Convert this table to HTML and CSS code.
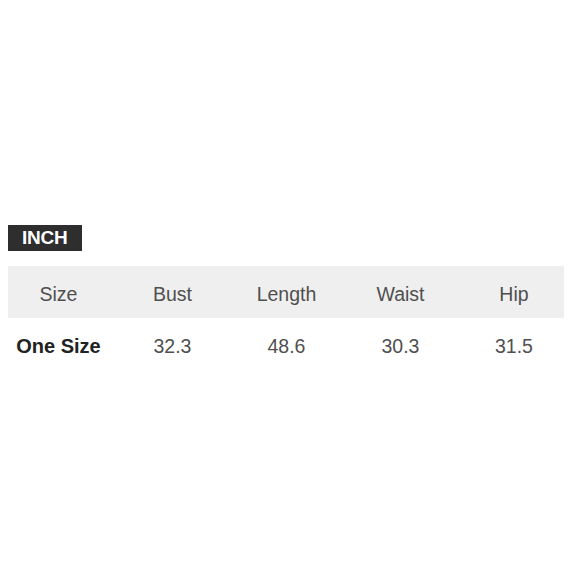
FILE: index.html
```html
<!DOCTYPE html>
<html>
<head>
<meta charset="utf-8">
<link rel="stylesheet" href="styles.css">
</head>
<body>
<div class="wrap">
  <div class="unit">INCH</div>
  <div class="table">
    <div class="row head">
      <div>Size</div><div>Bust</div><div>Length</div><div>Waist</div><div>Hip</div>
    </div>
    <div class="row">
      <div class="name">One Size</div><div>32.3</div><div>48.6</div><div>30.3</div><div>31.5</div>
    </div>
  </div>
</div>
</body>
</html>
```
FILE: styles.css
```css
html, body { margin: 0; padding: 0; background: #fff; }
body { font-family: "Liberation Sans", Arial, sans-serif; }
.wrap { padding: 225px 0 0 8px; width: 556px; }
.unit {
  display: inline-block;
  background: #2e2e2e;
  color: #fff;
  font-size: 19px;
  font-weight: bold;
  line-height: 26px;
  height: 26px;
  padding: 0 14px 0 14px;
  letter-spacing: -0.2px;
}
.table { margin-top: 15px; }
.row {
  display: grid;
  grid-template-columns: 101px 127px 101px 127px 100px;
  height: 52px;
  align-items: center;
  text-align: center;
  font-size: 19.5px;
  color: #4f4f4f;
}
.row.head { background: #efefef; }
.row .name { font-weight: bold; color: #222; font-size: 20px; }
.row > div { padding-top: 4px; }
```
